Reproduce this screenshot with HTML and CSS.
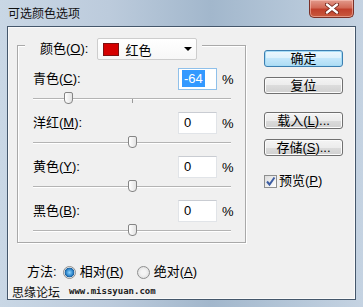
FILE: index.html
```html
<!DOCTYPE html>
<html lang="zh-CN">

<head>
    <meta charset="UTF-8">
    <title>可选颜色选项</title>
    <link rel="stylesheet" href="styles.css">
</head>

<body>
    <div class="window">
        <div class="titlebar">
            <span class="title">可选颜色选项</span>
            <span class="close">
                <svg width="14" height="11" viewBox="0 0 14 11">
                    <path d="M2 1.5 L12 9.5 M12 1.5 L2 9.5" stroke="#6a1e14" stroke-width="4" stroke-linecap="round" />
                    <path d="M2 1.5 L12 9.5 M12 1.5 L2 9.5" stroke="#fff" stroke-width="2.4" stroke-linecap="round" />
                </svg>
            </span>
        </div>
        <div class="client">
            <div class="main">
                <div class="group">
                    <div class="legend">
                        <span class="lbl">颜色(<u>O</u>):</span>
                        <div class="select">
                            <span class="swatch"></span>
                            <span class="sel-text">红色</span>
                            <span class="arrow"></span>
                        </div>
                    </div>
                    <div class="rows">
                        <div class="row">
                            <div class="line">
                                <span class="lbl">青色(<u>C</u>):</span>
                                <div class="input focus"><span class="hl">-64</span></div>
                                <span class="pct">%</span>
                            </div>
                            <div class="slider">
                                <div class="track"></div>
                                <div class="tick"></div>
                                <div class="thumb" style="left: 31px"></div>
                            </div>
                        </div>
                        <div class="row">
                            <div class="line">
                                <span class="lbl">洋红(<u>M</u>):</span>
                                <div class="input">0</div>
                                <span class="pct">%</span>
                            </div>
                            <div class="slider">
                                <div class="track"></div>
                                <div class="tick"></div>
                                <div class="thumb" style="left: 95px"></div>
                            </div>
                        </div>
                        <div class="row">
                            <div class="line">
                                <span class="lbl">黄色(<u>Y</u>):</span>
                                <div class="input">0</div>
                                <span class="pct">%</span>
                            </div>
                            <div class="slider">
                                <div class="track"></div>
                                <div class="tick"></div>
                                <div class="thumb" style="left: 95px"></div>
                            </div>
                        </div>
                        <div class="row">
                            <div class="line">
                                <span class="lbl">黑色(<u>B</u>):</span>
                                <div class="input">0</div>
                                <span class="pct">%</span>
                            </div>
                            <div class="slider">
                                <div class="track"></div>
                                <div class="tick"></div>
                                <div class="thumb" style="left: 95px"></div>
                            </div>
                        </div>
                    </div>
                </div>
                <div class="buttons">
                    <div class="btn default">确定</div>
                    <div class="btn">复位</div>
                    <div class="btn gap">载入(<u>L</u>)...</div>
                    <div class="btn">存储(<u>S</u>)...</div>
                    <div class="check-row">
                        <span class="checkbox">
                            <svg width="11" height="11" viewBox="0 0 11 11">
                                <path d="M2 5.5 L4.5 8.5 L9.5 1.5" fill="none" stroke="#3d5ea3" stroke-width="2" />
                            </svg>
                        </span>
                        <span>预览(<u>P</u>)</span>
                    </div>
                </div>
            </div>
            <div class="method">
                <span>方法:</span>
                <span class="radio on"></span>
                <span class="opt">相对(<u>R</u>)</span>
                <span class="radio"></span>
                <span class="opt">绝对(<u>A</u>)</span>
            </div>
            <div class="watermark">
                <span class="wm-cn">思缘论坛</span>
                <span class="wm-url">www.missyuan.com</span>
            </div>
        </div>
    </div>
</body>

</html>
```

FILE: styles.css
```css
body {
    margin: 0;
    font-family: "Liberation Sans", "Noto Sans CJK SC", sans-serif;
    font-size: 13px;
    color: #000;
}

.window {
    width: 363px;
    height: 307px;
    display: flex;
    flex-direction: column;
    box-sizing: border-box;
    background: linear-gradient(90deg, #c9d7e5 0%, #bccbdc 30%, #a2b7cc 58%, #b4c6d8 80%, #c5d3e2 100%);
}

/* 标题栏 */
.titlebar {
    height: 27px;
    display: flex;
    align-items: flex-start;
    justify-content: space-between;
}

.title {
    font-size: 12px;
    line-height: 14px;
    padding: 7px 0 0 8px;
    color: #111;
}

.close {
    width: 45px;
    height: 18px;
    margin-right: 9px;
    box-sizing: border-box;
    border: 1px solid #7a3128;
    border-top: none;
    border-radius: 0 0 5px 5px;
    background: linear-gradient(#e29a8c 0%, #d26a57 45%, #c0402c 55%, #c85a3e 100%);
    box-shadow: inset 0 0 0 1px rgba(255, 210, 200, 0.5);
    display: flex;
    align-items: center;
    justify-content: center;
}

.close svg {
    display: block;
}

/* 客户区 */
.client {
    flex: 1;
    margin: 0 7px 7px 7px;
    border: 1px solid #45576b;
    background: #f0f0f0;
    box-shadow: inset 0 0 0 1px #fafafa;
    display: flex;
    flex-direction: column;
}

.main {
    display: flex;
    padding: 18px 0 0 9px;
}

.group {
    width: 229px;
    height: 198px;
    box-sizing: border-box;
    border: 1px solid #a9a9a9;
    box-shadow: inset 1px 1px 0 #fff, 1px 1px 0 #fff;
}

.legend {
    display: flex;
    align-items: center;
    height: 22px;
    margin: -8px 0 0 7px;
    padding: 0 5px 0 15px;
    background: #f0f0f0;
    width: max-content;
}

.lbl {
    line-height: 16px;
}

.select {
    width: 100px;
    height: 22px;
    margin-left: 9px;
    box-sizing: border-box;
    border: 1px solid #cdcdcd;
    border-radius: 2px;
    background: linear-gradient(#ffffff, #f7f7f7);
    display: flex;
    align-items: center;
    padding-left: 5px;
}

.swatch {
    width: 16px;
    height: 13px;
    box-sizing: border-box;
    border: 1px solid #7d1010;
    background: #d50000;
    margin-right: 6px;
}

.sel-text {
    flex: 1;
}

.arrow {
    width: 0;
    height: 0;
    border-left: 4px solid transparent;
    border-right: 4px solid transparent;
    border-top: 4px solid #000;
    margin-right: 4px;
}

.rows {
    padding: 8px 0 0 15px;
}

.row {
    width: 200px;
}

.line {
    display: flex;
    align-items: center;
    height: 22px;
}

.line .lbl {
    flex: 1;
}

.input {
    width: 39px;
    height: 22px;
    box-sizing: border-box;
    border: 1px solid #e1e4e8;
    border-top-color: #c9ccd2;
    background: #fff;
    line-height: 20px;
    padding-left: 5px;
}

.input.focus {
    border-color: #8fc0ea;
    padding-left: 3px;
}

.hl {
    background: #3399ff;
    color: #fff;
    padding: 1px 2px;
}

.pct {
    width: 11px;
    margin-left: 5px;
}

.slider {
    position: relative;
    width: 198px;
    height: 22px;
}

.track {
    position: relative;
    top: 8px;
    height: 0;
    border-top: 1px solid #b4b4b4;
    border-bottom: 1px solid #ffffff;
}

.tick {
    position: absolute;
    left: 99px;
    top: 9px;
    width: 1px;
    height: 4px;
    background: #9a9a9a;
}

.thumb {
    position: absolute;
    top: 2px;
    width: 9px;
    height: 12px;
    box-sizing: border-box;
    border: 1px solid #858585;
    border-radius: 2px 2px 4px 4px;
    background: linear-gradient(90deg, #ffffff, #e3e3e3);
}

/* 右侧按钮 */
.buttons {
    width: 79px;
    margin: 5px 0 0 18px;
    display: flex;
    flex-direction: column;
}

.btn {
    height: 17px;
    box-sizing: border-box;
    border: 1px solid #707070;
    border-radius: 3px;
    background: linear-gradient(#f4f4f4 0%, #ececec 50%, #dcdcdc 50%, #d0d0d0 100%);
    box-shadow: inset 0 0 0 1px #fbfbfb;
    text-align: center;
    line-height: 15px;
    margin-bottom: 10px;
}

.btn.default {
    border-color: #3c7fb1;
    background: linear-gradient(#ecf7fd 0%, #dcf1fc 50%, #c3e7fb 50%, #aedcf4 100%);
    box-shadow: inset 0 0 0 1px #a6dcf6;
}

.btn.gap {
    margin-top: 8px;
}

.check-row {
    display: flex;
    align-items: center;
    margin-top: 7px;
    line-height: 16px;
}

.checkbox {
    width: 13px;
    height: 13px;
    box-sizing: border-box;
    border: 1px solid #8e8f8f;
    background: linear-gradient(135deg, #dcdcdc, #ffffff);
    display: flex;
    align-items: center;
    justify-content: center;
    margin-right: 2px;
}

.checkbox svg {
    display: block;
}

/* 方法 */
.method {
    display: flex;
    align-items: center;
    height: 16px;
    margin-top: 21px;
    padding-left: 19px;
    line-height: 16px;
}

.radio {
    width: 13px;
    height: 13px;
    box-sizing: border-box;
    border: 1px solid #8e8f8f;
    border-radius: 50%;
    background: radial-gradient(circle, #f4f4f4 30%, #d8d8d8 100%);
    margin-left: 6px;
}

.radio.on {
    background: radial-gradient(circle, #8fd6ff 0%, #2b83c9 45%, #1b5a92 60%, #f0f0f0 66%, #dcdcdc 100%);
}

.opt {
    margin-left: 4px;
}

.opt + .radio {
    margin-left: 13px;
}

.watermark {
    display: flex;
    align-items: center;
    height: 16px;
    margin-top: 3px;
    padding-left: 4px;
}

.wm-cn {
    font-size: 12px;
    color: #111;
}

.wm-url {
    margin-left: 9px;
    font-family: "DejaVu Sans Mono", monospace;
    font-weight: bold;
    font-size: 9px;
    color: #222;
}
```
